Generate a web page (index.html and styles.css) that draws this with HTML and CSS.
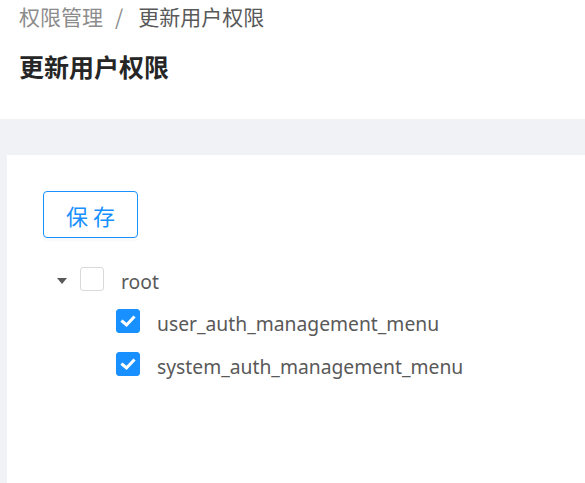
FILE: index.html
```html
<!DOCTYPE html>
<html lang="zh">
<head>
<meta charset="utf-8">
<link rel="stylesheet" href="styles.css">
</head>
<body>
<div class="header">
  <div class="breadcrumb">
    <span class="crumb">权限管理</span><span class="sep">/</span><span class="crumb current">更新用户权限</span>
  </div>
  <div class="title">更新用户权限</div>
</div>
<div class="content">
  <div class="card">
    <button class="btn">保 存</button>
    <div class="tree">
      <div class="node">
        <span class="switcher"><span class="caret"></span></span>
        <span class="checkbox"></span>
        <span class="label">root</span>
      </div>
      <div class="node child">
        <span class="switcher"></span>
        <span class="checkbox checked"><svg viewBox="0 0 24 24" width="24" height="24"><polyline points="6.5,12.5 10.5,16 17.5,8.5" fill="none" stroke="#fff" stroke-width="3" stroke-linecap="square"/></svg></span>
        <span class="label">user_auth_management_menu</span>
      </div>
      <div class="node child">
        <span class="switcher"></span>
        <span class="checkbox checked"><svg viewBox="0 0 24 24" width="24" height="24"><polyline points="6.5,12.5 10.5,16 17.5,8.5" fill="none" stroke="#fff" stroke-width="3" stroke-linecap="square"/></svg></span>
        <span class="label">system_auth_management_menu</span>
      </div>
    </div>
  </div>
</div>
</body>
</html>
```
FILE: styles.css
```css
html, body {
  margin: 0;
  padding: 0;
  height: 100%;
  overflow: hidden;
}
body {
  font-family: "Noto Sans", "Noto Sans CJK SC", sans-serif;
  background: #f0f2f5;
  display: flex;
  flex-direction: column;
}
.header {
  background: #fff;
  height: 119px;
  padding-left: 19px;
  box-sizing: border-box;
}
.breadcrumb {
  font-family: "Noto Sans CJK SC", sans-serif;
  font-size: 21px;
  line-height: 33px;
  color: #8c8c8c;
  display: flex;
}
.sep {
  margin: 0 15px 0 12px;
  color: #8c8c8c;
}
.current {
  color: #595959;
}
.title {
  font-family: "Noto Sans CJK SC", sans-serif;
  font-size: 25px;
  font-weight: 700;
  color: #262626;
  line-height: 36px;
  margin-top: 15px;
}
.content {
  flex: 1;
  padding: 36px 0 0 7px;
  display: flex;
}
.card {
  flex: 1;
  background: #fff;
  padding: 36px 36px 0 36px;
}
.btn {
  display: block;
  width: 95px;
  height: 47px;
  border: 1.5px solid #1890ff;
  border-radius: 4px;
  background: #fff;
  color: #1890ff;
  font-family: "Noto Sans CJK SC", sans-serif;
  font-size: 22px;
  padding: 0;
  box-shadow: 0 3px 0 rgba(0, 0, 0, 0.02);
}
.tree {
  margin-top: 20px;
  margin-left: 1px;
}
.node {
  display: flex;
  align-items: center;
  height: 42px;
}
.node.child {
  padding-left: 36px;
}
.node.child + .node.child {
  margin-top: 1px;
}
.switcher {
  width: 36px;
  height: 36px;
  display: flex;
  align-items: center;
  justify-content: center;
  flex: none;
}
.caret {
  width: 0;
  height: 0;
  border-left: 5px solid transparent;
  border-right: 5px solid transparent;
  border-top: 6px solid #595959;
  margin-top: 4px;
}
.checkbox {
  width: 24px;
  height: 24px;
  box-sizing: border-box;
  border: 1.5px solid #d9d9d9;
  border-radius: 3px;
  background: #fff;
  flex: none;
  display: block;
}
.checkbox.checked {
  background: #1890ff;
  border-color: #1890ff;
}
.checkbox svg {
  display: block;
  margin: -1.5px;
}
.label {
  margin-left: 17px;
  padding-top: 5px;
  font-size: 19.3px;
  color: #595959;
  line-height: 36px;
}
```
